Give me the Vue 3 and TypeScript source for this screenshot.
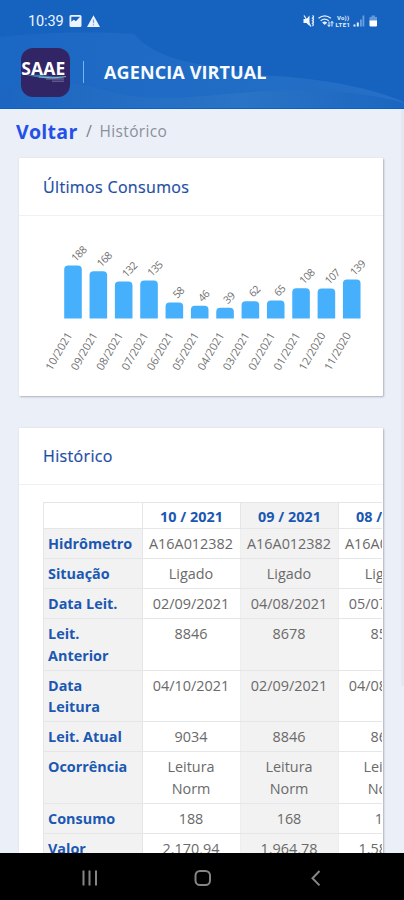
<script setup lang="ts">
interface Bar { month: string; value: number; top: number }
interface Reading { month: string; cells: string[] }

const bars: Bar[] = [
  { month: '10/2021', value: 188, top: 265.6 },
  { month: '09/2021', value: 168, top: 271.2 },
  { month: '08/2021', value: 132, top: 281.4 },
  { month: '07/2021', value: 135, top: 280.5 },
  { month: '06/2021', value: 58, top: 302.4 },
  { month: '05/2021', value: 46, top: 305.8 },
  { month: '04/2021', value: 39, top: 307.8 },
  { month: '03/2021', value: 62, top: 301.2 },
  { month: '02/2021', value: 65, top: 300.4 },
  { month: '01/2021', value: 108, top: 288.2 },
  { month: '12/2020', value: 107, top: 288.5 },
  { month: '11/2020', value: 139, top: 279.6 },
]
const barX = (i: number): number => 45.2 + i * 25.34
const barPath = (i: number, top: number): string => {
  const x = barX(i)
  const y = top - 216
  return `M${x} 102.6V${y + 4}q0-4 4-4h9.6q4 0 4 4V102.6z`
}

const labels: string[] = ['Hidrômetro', 'Situação', 'Data Leit.', 'Leit. Anterior', 'Data Leitura', 'Leit. Atual', 'Ocorrência', 'Consumo', 'Valor']
const readings: Reading[] = [
  { month: '10 / 2021', cells: ['A16A012382', 'Ligado', '02/09/2021', '8846', '04/10/2021', '9034', 'Leitura Norm', '188', '2.170,94'] },
  { month: '09 / 2021', cells: ['A16A012382', 'Ligado', '04/08/2021', '8678', '02/09/2021', '8846', 'Leitura Norm', '168', '1.964,78'] },
  { month: '08 / 2021', cells: ['A16A012382', 'Ligado', '05/07/2021', '8546', '04/08/2021', '8678', 'Leitura Norm', '132', '1.583,70'] },
]
</script>

<template>
  <div class="screen">
    <header class="top">
      <svg class="waves" viewBox="0 0 404 109" preserveAspectRatio="none">
        <defs>
          <linearGradient id="wa" x1="0" x2="1" y1="0" y2="0">
            <stop offset="0" stop-color="#1c69c5" /><stop offset="1" stop-color="#2b74c8" />
          </linearGradient>
          <linearGradient id="wb" x1="0" x2="1" y1="0" y2="0">
            <stop offset="0" stop-color="#1c66c1" /><stop offset=".6" stop-color="#2a74c6" /><stop offset="1" stop-color="#1b66c0" />
          </linearGradient>
        </defs>
        <path d="M0 37C50 32 95 32 134 34C145 48 168 60 202 65C225 69 240 73 262 76C310 78 365 86 404 103V109H0z" fill="url(#wa)" opacity=".75" />
        <path d="M0 90C40 80 75 82 105 91C150 105 205 96 250 93C300 89 360 91 404 104V109H0z" fill="url(#wb)" />
      </svg>
      <div class="status">
        <span class="clock">10:39</span>
        <svg class="notif" viewBox="0 0 32 14">
          <path fill="#eaf3ff" fill-rule="evenodd" d="M2 1h9q1.500 0 1.500 1.500v9q0 1.500-1.500 1.500H2Q.5 13 .5 11.500v-9Q.5 1 2 1zM2.300 2.700v5l2.500-2 2 1.600 3.900-4.100v-.5z" />
          <path fill="#eaf3ff" d="M24.500 1.200 31 13H18z" />
          <path stroke="#7aa8dc" stroke-width="1.200" d="M24.500 5.500v3.800m0 1v1.300" />
        </svg>
        <svg class="signals" viewBox="0 0 78 14">
          <g fill="none" stroke="#e6f1ff" stroke-width="1.300">
            <path d="M1 1.500 8 12.500M9.500 1.500q2 1 0 2.600 2 1.200 0 2.600 2 1.200 0 2.600 1.500 1.200 0 2.600" />
            <path d="M15.500 4.300q6.200-5 12.400 0M17.700 6.700q4-3 8 0M19.700 9q2-1.500 4 0" />
            <path d="M26 7.500v5m-1.500-1.800L26 12.500l1.500-1.800M29 12.500v-5m-1.500 1.800L29 7.500l1.500 1.800" stroke-width="1" />
          </g>
          <path d="M.5 5h3l3-3.500V12L3.500 9h-3z" fill="#f1f7ff" />
          <path d="m19.500 8.500 2.200 2.500 2.200-2.500z" fill="#e6f1ff" />
          <text x="34" y="6" textLength="12">Vo))</text>
          <text x="32.500" y="13" textLength="14.500">LTE1</text>
          <path d="M50.500 12.500v-2h2v2zM53.800 12.500V8.500h2v4z" fill="#e6f1ff" />
          <path d="M57 12.500v-7h1.800v7zM59.500 12.500v-11h1.800v11z" fill="#69a0df" />
          <path d="M66.500 3h2V1.500h3.500V3h2v4h-7.500z" fill="#609ad9" />
          <path d="M66.500 6.500H74v5q0 1-1 1h-5.500q-1 0-1-1z" fill="#fff" />
        </svg>
      </div>
      <div class="brand">
        <svg class="logo" viewBox="0 0 49 49">
          <rect width="49" height="49" rx="12" fill="#322565" />
          <path d="M6 27.300C18 25 30 30 46 28.500 35 33 20 30 6 27.300z" fill="#397fa8" />
          <path d="M18 29q14 2 27-.5" stroke="#a9cbdc" stroke-width=".7" fill="none" />
          <path d="M25 31h18M31 33.200h12" stroke="#8785ac" stroke-width=".8" />
          <text x=".3" y="26.800" textLength="44">SAAE</text>
        </svg>
        <i class="divider"></i>
        <h1>AGENCIA VIRTUAL</h1>
      </div>
    </header>

    <main>
      <div class="content">
        <nav class="crumbs"><a>Voltar</a><span class="slash">/</span><span class="here">Histórico</span></nav>

        <section class="card usage">
          <h2>Últimos Consumos</h2>
          <svg class="chart" viewBox="0 0 364 180">
            <g v-for="(b, i) in bars" :key="b.month">
              <path :d="barPath(i, b.top)" fill="#47b0fd" />
              <text class="value" :transform="`translate(${barX(i) + 11.6} ${b.top - 219.4}) rotate(-45)`">{{ b.value }}</text>
              <text text-anchor="end" :transform="`translate(${barX(i) + 8.4} 119) rotate(-60)`">{{ b.month }}</text>
            </g>
          </svg>
        </section>

        <section class="card history">
          <h2>Histórico</h2>
          <div class="scroller">
            <table>
              <colgroup><col class="c0" /><col class="c1" /><col class="c1" /><col class="c1" /></colgroup>
              <thead>
                <tr><th></th><th v-for="r in readings" :key="r.month">{{ r.month }}</th></tr>
              </thead>
              <tbody>
                <tr v-for="(label, i) in labels" :key="label">
                  <th>{{ label }}</th>
                  <td v-for="r in readings" :key="r.month">{{ r.cells[i] }}</td>
                </tr>
              </tbody>
            </table>
          </div>
        </section>
      </div>
      <div class="scrollbar"></div>
    </main>

    <footer>
      <svg viewBox="0 0 404 47" fill="none" stroke="#858585" stroke-width="2">
        <path d="M83.500 17.500v15M89.500 17.500v15M96 17.500v15" />
        <rect x="195.500" y="18" width="14.500" height="14" rx="4.500" />
        <path d="m319.500 18-7 7.200 7 7.200" />
      </svg>
    </footer>
  </div>
</template>

<style>
body { background: #ebeff8; overflow: hidden; }
</style>

<style scoped>
.screen { width: 404px; height: 900px; display: flex; flex-direction: column; overflow: hidden; background: #ebeff8; font-family: "Open Sans", "Noto Sans", sans-serif; }
.top { position: relative; flex: 0 0 109px; height: 109px; box-sizing: border-box; background: #1662bf; border-bottom: 1px solid #0e5fc4; }
.waves { position: absolute; inset: 0; width: 100%; height: 108px; }
.status { position: relative; display: flex; align-items: center; height: 42px; padding: 0 23px 0 28px; }
.clock { font: 400 14.5px/20px Roboto, sans-serif; color: #eef5ff; width: 36px; letter-spacing: -.1px; padding-top: 1px; }
.notif { width: 32px; height: 14px; margin-left: 5px; }
.signals { width: 78px; height: 14px; margin-left: auto; }
.signals text { font: 700 6px Roboto, sans-serif; fill: #e6f1ff; }
.brand { position: relative; display: flex; align-items: center; height: 49px; margin-top: 5.500px; padding-left: 20.500px; }
.logo { width: 49px; height: 49px; }
.logo text { font: 700 17.500px "Open Sans", sans-serif; fill: #fff; }
.divider { width: 1.500px; height: 22px; margin-left: 13px; background: #78b5ee; }
h1 { margin: 0 0 0 20px; font-size: 18px; line-height: 24px; font-weight: 700; color: #f7fbff; white-space: nowrap; letter-spacing: .12px; }
main { flex: 1; min-height: 0; display: flex; overflow: hidden; }
.content { flex: 1; min-width: 0; padding-left: 19px; }
.scrollbar { width: 3px; height: 577px; background: #e4e8f2; }
.crumbs { display: flex; align-items: center; height: 44px; margin: 0 0 5px -3px; }
.crumbs a { font-size: 19.500px; font-weight: 700; color: #2450e8; width: 70px; letter-spacing: .3px; }
.slash { font-size: 16px; color: #7d818a; width: 13.500px; }
.here { font-size: 15.500px; color: #8c9098; letter-spacing: .35px; }
.card { width: 364px; height: 238px; background: #fff; border-radius: 1px; box-shadow: 1px 1px 2px #aeb2bb, 0 0 2px #dfe2ea; overflow: hidden; }
h2 { margin: 0; height: 57px; box-sizing: border-box; border-bottom: 1px solid #f0f1f3; padding: 0 0 0 24px; font-size: 16px; line-height: 57px; font-weight: 400; color: #1c4da4; letter-spacing: .35px; -webkit-text-stroke: .2px #1c4da4; }
.usage h2 { height: 58px; line-height: 59px; }
.chart { display: block; width: 364px; height: 180px; }
.chart text { font: 11px "Open Sans", sans-serif; fill: #707070; }
.chart .value { font-size: 10.500px; letter-spacing: -.6px; }
.history { height: 460px; margin-top: 32px; }
.scroller { margin: 17px 1px 0 24px; overflow: hidden; }
table { table-layout: fixed; width: 393px; border-collapse: collapse; font-size: 14.400px; line-height: 21.500px; color: #6a6a6a; }
.c0 { width: 99px; } .c1 { width: 98px; }
th, td { border: 1px solid #e4e6e8; vertical-align: top; text-align: center; font-weight: 400; padding: 4px 10px 3.500px; }
td { padding-left: 4px; padding-right: 5px; border-left-color: #eceeef; border-right-color: #eceeef; }
tbody tr:nth-child(7) td { padding-left: 20px; padding-right: 21px; }
th { color: #1b58b2; font-weight: 700; }
thead th { padding: 3px 0 .5px 0; }
tbody th { background: #f2f2f2; text-align: left; padding-left: 4px; padding-right: 9px; }
tr > :nth-child(3) { background: #f2f2f2; }
footer { flex: 0 0 47px; height: 47px; background: #000; }
footer svg { display: block; width: 404px; height: 47px; }
</style>
